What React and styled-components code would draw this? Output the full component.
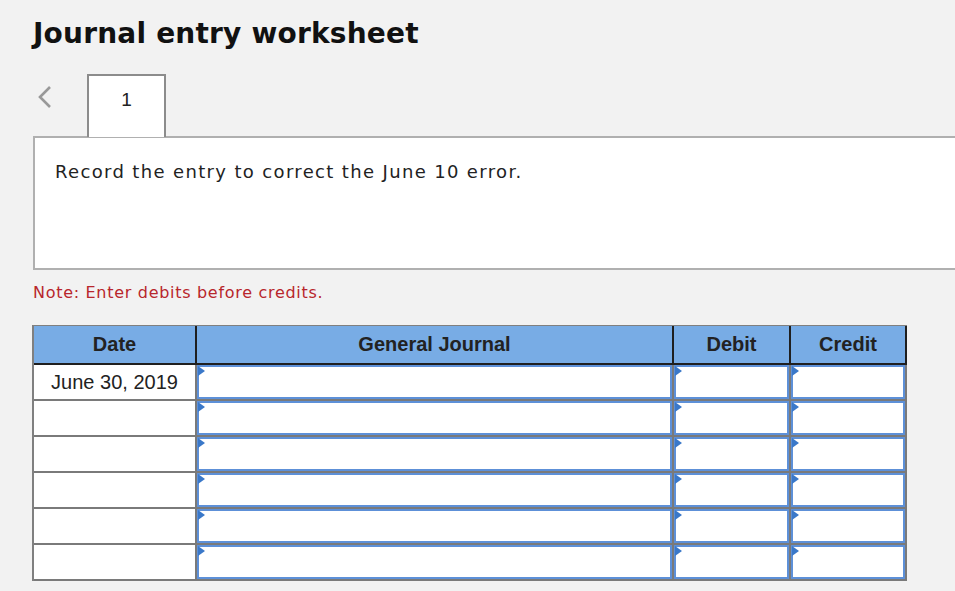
import React from 'react';
import styled, { createGlobalStyle } from 'styled-components';

const GlobalStyle = createGlobalStyle`
  html, body {
    margin: 0;
    padding: 0;
    background: #f2f2f2;
    overflow: hidden;
  }
`;

const Page = styled.div`
  width: 955px;
  height: 591px;
  padding: 16px 0 0 33px;
  box-sizing: border-box;
  font-family: "DejaVu Sans", Verdana, sans-serif;
  color: #111;
`;

const Title = styled.h1`
  margin: 0;
  font-size: 28px;
  font-weight: bold;
  line-height: 36px;
  letter-spacing: 0.2px;
`;

const TabBar = styled.div`
  display: flex;
  align-items: flex-start;
  margin-top: 22px;
  height: 62px;
`;

const PrevButton = styled.div`
  width: 54px;
  height: 46px;
  display: flex;
  align-items: center;
  padding-left: 4px;
  box-sizing: border-box;
`;

const Tab = styled.div`
  width: 79px;
  height: 63px;
  box-sizing: border-box;
  background: #fff;
  border: 2px solid #8c8c8c;
  border-bottom: none;
  display: flex;
  justify-content: center;
  padding-top: 13px;
  font-family: "Liberation Sans", Arial, sans-serif;
  font-size: 19px;
  color: #222;
  position: relative;
  z-index: 1;
`;

const Panel = styled.div`
  width: 940px;
  height: 134px;
  box-sizing: border-box;
  background: #fff;
  border: 2px solid #b0b0b0;
  border-right: none;
  padding: 23px 0 0 20px;
  font-size: 18px;
  letter-spacing: 1.35px;
  color: #222;
`;

const Note = styled.p`
  margin: 14px 0 0;
  font-size: 16px;
  letter-spacing: 0.7px;
  color: #b8262c;
  line-height: 18px;
`;

const Grid = styled.div`
  margin-top: 23px;
  margin-left: -1px;
  width: max-content;
  display: grid;
  grid-template-columns: 163px 477px 117px 116px;
  border-left: 2px solid #808080;
  border-top: 1px solid #808080;
  font-family: "Liberation Sans", Arial, sans-serif;
`;

const HeadCell = styled.div`
  height: 39px;
  background: #78ace5;
  border-right: 2px solid #1f1f1f;
  border-bottom: 2px solid #1f1f1f;
  box-sizing: border-box;
  display: flex;
  align-items: center;
  justify-content: center;
  font-weight: bold;
  font-size: 20px;
  color: #222;
`;

const DateCell = styled.div`
  height: 36px;
  background: #fff;
  border-right: 2px solid #7a7a7a;
  border-bottom: 2px solid #7a7a7a;
  box-sizing: border-box;
  display: flex;
  align-items: center;
  justify-content: center;
  font-size: 20px;
  color: #222;
`;

const EntryCell = styled.div`
  height: 36px;
  background: #7a7a7a;
  border-right: 2px solid #7a7a7a;
  border-bottom: 2px solid #7a7a7a;
  box-sizing: border-box;
  position: relative;
`;

const EntryBox = styled.div`
  height: 100%;
  box-sizing: border-box;
  background: #fff;
  border: 2px solid #5d90d8;
`;

const Marker = styled.span`
  position: absolute;
  left: 1px;
  top: 1px;
  width: 0;
  height: 0;
  border-top: 5px solid transparent;
  border-bottom: 5px solid transparent;
  border-left: 7px solid #3a78c9;
`;

const columns = ['Date', 'General Journal', 'Debit', 'Credit'];
const rows = ['June 30, 2019', '', '', '', '', ''];

function Entry() {
  return (
    <EntryCell>
      <EntryBox />
      <Marker />
    </EntryCell>
  );
}

export default function App() {
  return (
    <>
      <GlobalStyle />
      <Page>
        <Title>Journal entry worksheet</Title>
        <TabBar>
          <PrevButton>
            <svg width="16" height="24" viewBox="0 0 16 24">
              <path d="M13 2 L3 12 L13 22" fill="none" stroke="#999" strokeWidth="2.6" />
            </svg>
          </PrevButton>
          <Tab>1</Tab>
        </TabBar>
        <Panel>Record the entry to correct the June 10 error.</Panel>
        <Note>Note: Enter debits before credits.</Note>
        <Grid>
          {columns.map((c) => (
            <HeadCell key={c}>{c}</HeadCell>
          ))}
          {rows.map((d, i) => (
            <React.Fragment key={i}>
              <DateCell>{d}</DateCell>
              <Entry />
              <Entry />
              <Entry />
            </React.Fragment>
          ))}
        </Grid>
      </Page>
    </>
  );
}
